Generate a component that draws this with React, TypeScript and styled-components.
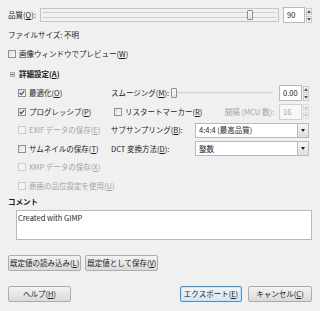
import React from 'react'
import styled, { createGlobalStyle, css } from 'styled-components'

const GlobalStyle = createGlobalStyle`
  html, body {
    margin: 0;
    padding: 0;
    background: #f0f0f0;
  }
  body {
    font-family: 'Noto Sans CJK JP', 'Noto Sans', sans-serif;
    font-size: 7.5px;
    color: #1c1c1c;
  }
`

const Dialog = styled.div`
  width: 320px;
  height: 311px;
  box-sizing: border-box;
  padding: 7px 8px 0;
  display: flex;
  flex-direction: column;
`

const Row = styled.div<{ $h?: number; $mt?: number }>`
  display: flex;
  align-items: center;
  height: ${p => p.$h ?? 16}px;
  margin-top: ${p => p.$mt ?? 0}px;
  white-space: nowrap;
`

const Text = styled.span<{ $disabled?: boolean; $bold?: boolean }>`
  color: ${p => (p.$disabled ? '#a3a3a3' : '#1c1c1c')};
  font-weight: ${p => (p.$bold ? 700 : 400)};
  line-height: 10px;
  white-space: nowrap;
`

const LabelCell = styled(Text)<{ $w?: number }>`
  ${p => p.$w && css`width: ${p.$w}px; flex: none;`}
`

/* ---------- slider ---------- */

const Scale = styled.div<{ $framed?: boolean }>`
  flex: 1;
  position: relative;
  height: 14px;
  display: flex;
  align-items: center;
  box-sizing: border-box;
  padding: 0 2px;
  ${p => p.$framed && css`
    border: 1px solid #c4c4c4;
  `}
`

const Groove = styled.div<{ $framed?: boolean }>`
  flex: 1;
  height: ${p => (p.$framed ? 6 : 2)}px;
  box-sizing: border-box;
  border-top: 1px solid ${p => (p.$framed ? '#cfcfcf' : '#d2d2d2')};
  border-bottom: 1px solid ${p => (p.$framed ? '#cfcfcf' : '#e8e8e8')};
`

const Thumb = styled.div`
  position: absolute;
  top: 50%;
  width: 6px;
  height: 10px;
  margin-top: -5px;
  margin-left: -3px;
  box-sizing: border-box;
  border: 1px solid #8e8e8e;
  border-radius: 1px;
  background: linear-gradient(#fafafa, #e2e2e2);
`

function Slider ({ value, max, framed }: { value: number; max: number; framed?: boolean }) {
  return (
    <Scale $framed={framed}>
      <Groove $framed={framed} />
      <Thumb style={{ left: `${(value / max) * 100}%` }} />
    </Scale>
  )
}

/* ---------- spin button ---------- */

const Spin = styled.div`
  display: flex;
  align-items: center;
  flex: none;
`

const SpinEntry = styled.div<{ $disabled?: boolean; $w: number }>`
  width: ${p => p.$w}px;
  height: 16px;
  box-sizing: border-box;
  border: 1px solid ${p => (p.$disabled ? '#d0d0d0' : '#b7b9bf')};
  background: ${p => (p.$disabled ? '#f7f7f7' : '#ffffff')};
  color: ${p => (p.$disabled ? '#a3a3a3' : '#1c1c1c')};
  padding: 0 3px;
  line-height: 14px;
`

const SpinArrows = styled.div`
  display: flex;
  flex-direction: column;
  margin-left: 1px;
  gap: 1px;
`

const SpinArrow = styled.div<{ $disabled?: boolean }>`
  width: 6px;
  height: 7px;
  box-sizing: border-box;
  border: 1px solid ${p => (p.$disabled ? '#dedede' : '#c9cbd2')};
  background: #f4f4f6;
  display: flex;
  align-items: center;
  justify-content: center;
`

function Arrow ({ up, color }: { up?: boolean; color: string }) {
  return (
    <svg width='4' height='3' viewBox='0 0 4 3'>
      <path d={up ? 'M0 3 L2 0 L4 3 Z' : 'M0 0 L4 0 L2 3 Z'} fill={color} />
    </svg>
  )
}

function SpinButton ({ value, width, disabled }: { value: string; width: number; disabled?: boolean }) {
  const c = disabled ? '#c3c3c3' : '#4c5f8a'
  return (
    <Spin>
      <SpinEntry $w={width} $disabled={disabled}>{value}</SpinEntry>
      <SpinArrows>
        <SpinArrow $disabled={disabled}><Arrow up color={c} /></SpinArrow>
        <SpinArrow $disabled={disabled}><Arrow color={c} /></SpinArrow>
      </SpinArrows>
    </Spin>
  )
}

/* ---------- combo ---------- */

const Combo = styled.div`
  flex: 1;
  height: 15px;
  box-sizing: border-box;
  border: 1px solid #b7b9bf;
  background: #ffffff;
  display: flex;
  align-items: center;
  padding-left: 3px;
`

const ComboText = styled.span`
  flex: 1;
  line-height: 10px;
`

const ComboButton = styled.div`
  width: 11px;
  height: 13px;
  box-sizing: border-box;
  border-left: 1px solid #b9b9b9;
  background: linear-gradient(#f6f6f6, #dedede);
  display: flex;
  align-items: center;
  justify-content: center;
`

function ComboBox ({ value }: { value: string }) {
  return (
    <Combo>
      <ComboText>{value}</ComboText>
      <ComboButton><Arrow color='#222' /></ComboButton>
    </Combo>
  )
}

/* ---------- check button ---------- */

const CheckRow = styled.div<{ $ml?: number }>`
  display: flex;
  align-items: center;
  gap: 3px;
  margin-left: ${p => p.$ml ?? 0}px;
`

const Box = styled.span<{ $disabled?: boolean }>`
  width: 8px;
  height: 8px;
  flex: none;
  box-sizing: border-box;
  border: 1px solid ${p => (p.$disabled ? '#cdcdcd' : '#8f8f8f')};
  background: ${p => (p.$disabled ? '#f4f4f4' : 'linear-gradient(135deg, #dcdcdc, #fbfbfb)')};
  display: flex;
  align-items: center;
  justify-content: center;
`

function Check ({ label, checked, disabled, ml }: { label: React.ReactNode; checked?: boolean; disabled?: boolean; ml?: number }) {
  return (
    <CheckRow $ml={ml}>
      <Box $disabled={disabled}>
        {checked && (
          <svg width='6' height='6' viewBox='0 0 6 6'>
            <path d='M0.8 3 L2.4 4.6 L5.2 1' stroke='#2f4a86' strokeWidth='1.2' fill='none' />
          </svg>
        )}
      </Box>
      <Text $disabled={disabled}>{label}</Text>
    </CheckRow>
  )
}

/* ---------- expander ---------- */

const ExpanderIcon = styled.span`
  width: 5px;
  height: 5px;
  box-sizing: border-box;
  border: 1px solid #a8a8a8;
  margin: 0 4px 0 2px;
  position: relative;
  &::after {
    content: '';
    position: absolute;
    left: 0;
    right: 0;
    top: 1px;
    height: 1px;
    background: #6a6a6a;
  }
`

/* ---------- advanced grid ---------- */

const Advanced = styled.div`
  display: grid;
  grid-template-columns: 93px 1fr;
  grid-auto-rows: 18.5px;
  margin: 2px 3px 0 10px;
  align-items: center;
`

const Cell = styled.div`
  display: flex;
  align-items: center;
  min-width: 0;
`

const Interval = styled.div`
  margin-left: auto;
  display: flex;
  align-items: center;
  gap: 5px;
`

/* ---------- comment ---------- */

const CommentBox = styled.textarea`
  margin: 2px 0 0 8px;
  height: 30px;
  box-sizing: border-box;
  border: 1px solid #b7b9bf;
  background: #ffffff;
  font: inherit;
  color: #1c1c1c;
  line-height: 10px;
  padding: 2px 1px;
  resize: none;
  outline: none;
`

/* ---------- buttons ---------- */

const Button = styled.button<{ $default?: boolean; $w?: number }>`
  height: 16px;
  ${p => p.$w && css`width: ${p.$w}px;`}
  box-sizing: border-box;
  padding: 0 1px;
  border: 1px solid #acacac;
  border-radius: 2px;
  background: linear-gradient(#f3f3f3, #e6e6e6 50%, #dadada);
  font: inherit;
  color: #1c1c1c;
  line-height: 12px;
  white-space: nowrap;
  ${p => p.$default && css`
    border-color: #4a90c8;
    box-shadow: inset 0 0 0 1px #c6e4f7;
    background: linear-gradient(#f2f7fb, #e3edf4 50%, #d6e4ee);
  `}
`

const ButtonRow = styled.div<{ $mt: number }>`
  display: flex;
  gap: 4px;
  margin-top: ${p => p.$mt}px;
`

const ActionRow = styled.div`
  display: flex;
  align-items: center;
  margin-top: 15px;
  gap: 6px;
`

const Spacer = styled.div`
  flex: 1;
`

export default function App () {
  return (
    <>
      <GlobalStyle />
      <Dialog>
        <Row>
          <Text>品質(<u>Q</u>):</Text>
          <Row style={{ flex: 1, margin: '0 4px' }}>
            <Slider value={88} max={100} framed />
          </Row>
          <SpinButton value='90' width={22} />
        </Row>
        <Row $mt={4}>
          <Text>ファイルサイズ: 不明</Text>
        </Row>
        <Row $mt={3}>
          <Check label={<>画像ウィンドウでプレビュー(<u>W</u>)</>} />
        </Row>
        <Row $mt={4}>
          <ExpanderIcon />
          <Text $bold>詳細設定(<u>A</u>)</Text>
        </Row>

        <Advanced>
          <Cell><Check checked label={<>最適化(<u>O</u>)</>} /></Cell>
          <Cell>
            <Text>スムージング(<u>M</u>):</Text>
            <Row style={{ flex: 1, margin: '0 4px 0 5px' }}>
              <Slider value={0} max={1} />
            </Row>
            <SpinButton value='0.00' width={23} />
          </Cell>

          <Cell><Check checked label={<>プログレッシブ(<u>P</u>)</>} /></Cell>
          <Cell>
            <Check ml={3} label={<>リスタートマーカー(<u>R</u>)</>} />
            <Interval>
              <Text $disabled>間隔 (MCU 数):</Text>
              <SpinButton value='16' width={23} disabled />
            </Interval>
          </Cell>

          <Cell><Check disabled label={<>EXIF データの保存(<u>E</u>)</>} /></Cell>
          <Cell>
            <LabelCell $w={84}>サブサンプリング(<u>B</u>):</LabelCell>
            <ComboBox value='4:4:4 (最高品質)' />
          </Cell>

          <Cell><Check label={<>サムネイルの保存(<u>T</u>)</>} /></Cell>
          <Cell>
            <LabelCell $w={84}>DCT 変換方法(<u>D</u>):</LabelCell>
            <ComboBox value='整数' />
          </Cell>

          <Cell><Check disabled label={<>XMP データの保存(<u>X</u>)</>} /></Cell>
          <Cell />

          <Cell><Check disabled label={<>原画の品位設定を使用(<u>U</u>)</>} /></Cell>
          <Cell />
        </Advanced>

        <Row $h={12} $mt={1}>
          <Text $bold>コメント</Text>
        </Row>
        <CommentBox readOnly value='Created with GIMP' />

        <ButtonRow $mt={15}>
          <Button>既定値の読み込み(<u>L</u>)</Button>
          <Button>既定値として保存(<u>V</u>)</Button>
        </ButtonRow>

        <ActionRow>
          <Button $w={63}>ヘルプ(<u>H</u>)</Button>
          <Spacer />
          <Button $w={62} $default>エクスポート(<u>E</u>)</Button>
          <Button $w={64}>キャンセル(<u>C</u>)</Button>
        </ActionRow>
      </Dialog>
    </>
  )
}
